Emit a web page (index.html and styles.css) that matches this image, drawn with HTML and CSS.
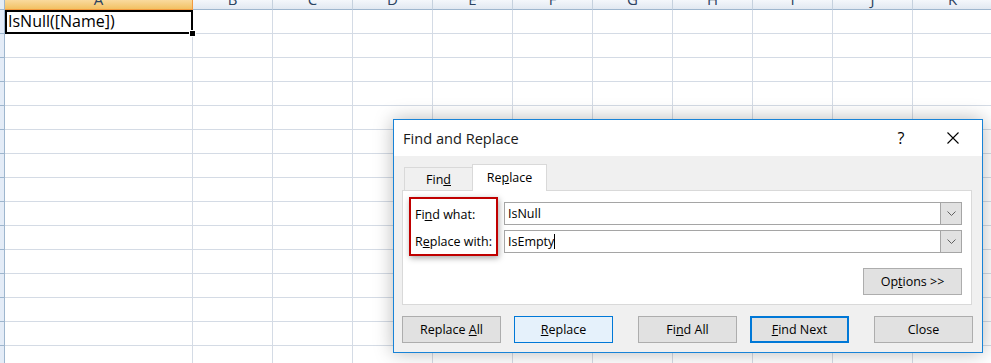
FILE: index.html
```html
<!DOCTYPE html>
<html lang="en">
<head>
    <meta charset="UTF-8">
    <title>Find and Replace</title>
    <link rel="stylesheet" href="styles.css">
</head>
<body>

<div class="sheet" id="sheet">
    <div class="corner"></div>
    <div class="col-head selected"><span>A</span></div>
    <div class="col-head"><span>B</span></div>
    <div class="col-head"><span>C</span></div>
    <div class="col-head"><span>D</span></div>
    <div class="col-head"><span>E</span></div>
    <div class="col-head"><span>F</span></div>
    <div class="col-head"><span>G</span></div>
    <div class="col-head"><span>H</span></div>
    <div class="col-head"><span>I</span></div>
    <div class="col-head"><span>J</span></div>
    <div class="col-head"><span>K</span></div>
    <!-- rows are added by the script below -->
</div>

<div class="dialog">
    <div class="title-bar">
        <div class="title">Find and Replace</div>
        <div class="help">?</div>
        <div class="close">
            <svg width="12" height="12" viewBox="0 0 12 12"><path d="M0.5 0.5L11.5 11.5M11.5 0.5L0.5 11.5" stroke="#000" stroke-width="1.1" fill="none"/></svg>
        </div>
    </div>
    <div class="dlg-body">
        <div class="tabs">
            <div class="tab">Fin<u>d</u></div>
            <div class="tab active">Re<u>p</u>lace</div>
        </div>
        <div class="panel">
            <div class="find-row">
                <div class="label-box">
                    <div class="label">Fi<u>n</u>d what:</div>
                    <div class="label">R<u>e</u>place with:</div>
                </div>
                <div class="fields">
                    <div class="combo">
                        <div class="combo-text">IsNull</div>
                        <div class="combo-drop"><svg width="9" height="5" viewBox="0 0 9 5"><polyline points="0.5,0.5 4.5,4.5 8.5,0.5" stroke="#606060" fill="none"/></svg></div>
                    </div>
                    <div class="combo">
                        <div class="combo-text">IsEmpty<span class="caret"></span></div>
                        <div class="combo-drop"><svg width="9" height="5" viewBox="0 0 9 5"><polyline points="0.5,0.5 4.5,4.5 8.5,0.5" stroke="#606060" fill="none"/></svg></div>
                    </div>
                </div>
            </div>
            <div class="options-row">
                <button class="btn">Op<u>t</u>ions &gt;&gt;</button>
            </div>
        </div>
        <div class="button-row">
            <button class="btn">Replace <u>A</u>ll</button>
            <button class="btn btn-hover gap-sm"><u>R</u>eplace</button>
            <button class="btn gap-lg">Fi<u>n</u>d All</button>
            <button class="btn btn-default gap-sm"><u>F</u>ind Next</button>
            <button class="btn gap-lg">Close</button>
        </div>
    </div>
</div>

<script>
    const sheet = document.getElementById('sheet');
    for (let r = 1; r <= 15; r++) {
        const head = document.createElement('div');
        head.className = 'row-head';
        sheet.appendChild(head);
        for (let c = 0; c < 11; c++) {
            const cell = document.createElement('div');
            cell.className = 'cell';
            if (r === 1 && c === 0) {
                cell.className = 'cell active';
                cell.innerHTML = 'IsNull([Name])<span class="fill-handle"></span>';
            }
            sheet.appendChild(cell);
        }
    }
</script>
</body>
</html>
```

FILE: styles.css
```css
body {
    margin: 0;
    width: 991px;
    height: 363px;
    overflow: hidden;
    position: relative;
    background-color: #fff;
    font-family: "Open Sans", "Noto Sans", sans-serif;
}
.sheet {
    display: grid;
    grid-template-columns: 5px 188px repeat(10, 80px);
    grid-template-rows: 10px;
    grid-auto-rows: 24px;
}
.corner {
    background-color: #e4ecf7;
    border-right: 1px solid #9eb6ce;
    border-bottom: 1px solid #9eb6ce;
    box-sizing: border-box;
}
.col-head {
    background: linear-gradient(#f4f7fb, #e1e8f1);
    border-right: 1px solid #c5d1de;
    border-bottom: 1px solid #9eb6ce;
    box-sizing: border-box;
    overflow: hidden;
    text-align: center;
    color: #2b4260;
    font-size: 15px;
    line-height: 15px;
}
.col-head span {
    display: block;
    margin-top: -8px;
}
.col-head.selected {
    background: linear-gradient(#f9da9e, #f2c163);
    border-right-color: #f29a3e;
    border-bottom-color: #f29a3e;
}
.row-head {
    background-color: #e4ecf7;
    border-right: 1px solid #9eb6ce;
    border-bottom: 1px solid #9eb6ce;
    box-sizing: border-box;
}
.cell {
    border-right: 1px solid #d4dbe5;
    border-bottom: 1px solid #d4dbe5;
    box-sizing: border-box;
}
.cell.active {
    position: relative;
    border: 2px solid #000;
    padding-left: 1px;
    font-size: 16px;
    line-height: 19px;
    color: #000;
}
.fill-handle {
    position: absolute;
    right: -5px;
    bottom: -5px;
    width: 5px;
    height: 5px;
    background: #000;
    border: 1px solid #fff;
    z-index: 2;
}

/* dialog */
.dialog {
    position: absolute;
    left: 393px;
    top: 119px;
    width: 590px;
    height: 234px;
    box-sizing: border-box;
    border: 1px solid #1883d7;
    background-color: #f0f0f0;
    box-shadow: 0 0 18px rgba(0, 0, 0, 0.28);
    font-size: 12.5px;
    color: #000;
}
.title-bar {
    height: 36px;
    background-color: #fff;
    display: flex;
    align-items: center;
}
.title {
    flex: 1;
    padding-left: 9px;
    font-size: 14.6px;
    color: #1a1a1a;
}
.help {
    width: 46px;
    text-align: center;
    font-size: 16px;
}
.close {
    width: 58px;
    display: flex;
    justify-content: center;
}
.dlg-body {
    padding: 8px 10px 8px 8px;
}
.tabs {
    display: flex;
    align-items: flex-end;
    height: 26px;
    margin-left: 2px;
}
.tab {
    width: 68px;
    height: 23px;
    box-sizing: border-box;
    border: 1px solid #d9d9d9;
    border-bottom: none;
    border-right: none;
    text-align: center;
    line-height: 23px;
}
.tab.active {
    width: 75px;
    height: 27px;
    border-right: 1px solid #d9d9d9;
    background-color: #fff;
    margin-bottom: -1px;
    position: relative;
    line-height: 25px;
}
.panel {
    height: 115px;
    box-sizing: border-box;
    background-color: #fff;
    border: 1px solid #d9d9d9;
    padding: 6px 9px 10px 6px;
}
.find-row {
    display: flex;
}
.label-box {
    width: 89px;
    height: 59px;
    box-sizing: border-box;
    border: 2px solid #c00000;
    padding: 4px 0 0 4px;
    box-shadow: 1px 2px 6px rgba(0, 0, 0, 0.35);
}
.label {
    height: 23px;
    line-height: 23px;
    margin-bottom: 4px;
    white-space: nowrap;
}
.fields {
    flex: 1;
    margin-left: 6px;
    padding-top: 5px;
}
.combo {
    display: flex;
    height: 23px;
    box-sizing: border-box;
    border: 1px solid #a5a5a5;
    margin-bottom: 5px;
    background-color: #fff;
}
.combo-text {
    flex: 1;
    padding-left: 3px;
    line-height: 21px;
}
.caret {
    display: inline-block;
    width: 1px;
    height: 15px;
    background: #000;
    vertical-align: -3px;
}
.combo-drop {
    width: 20px;
    background-color: #e1e1e1;
    border-left: 1px solid #a5a5a5;
    display: flex;
    align-items: center;
    justify-content: center;
}
.options-row {
    display: flex;
    justify-content: flex-end;
    margin-top: 10px;
}
.btn {
    width: 99px;
    height: 27px;
    box-sizing: border-box;
    border: 1px solid #adadad;
    background-color: #e1e1e1;
    font: inherit;
    color: #000;
    padding: 0;
    flex-shrink: 0;
}
.btn-hover {
    background-color: #e5f1fb;
    border-color: #0078d7;
}
.btn-default {
    border: 2px solid #0078d7;
}
.button-row {
    display: flex;
    margin-top: 11px;
}
.gap-sm {
    margin-left: 13px;
}
.gap-lg {
    margin-left: 25px;
}
```
